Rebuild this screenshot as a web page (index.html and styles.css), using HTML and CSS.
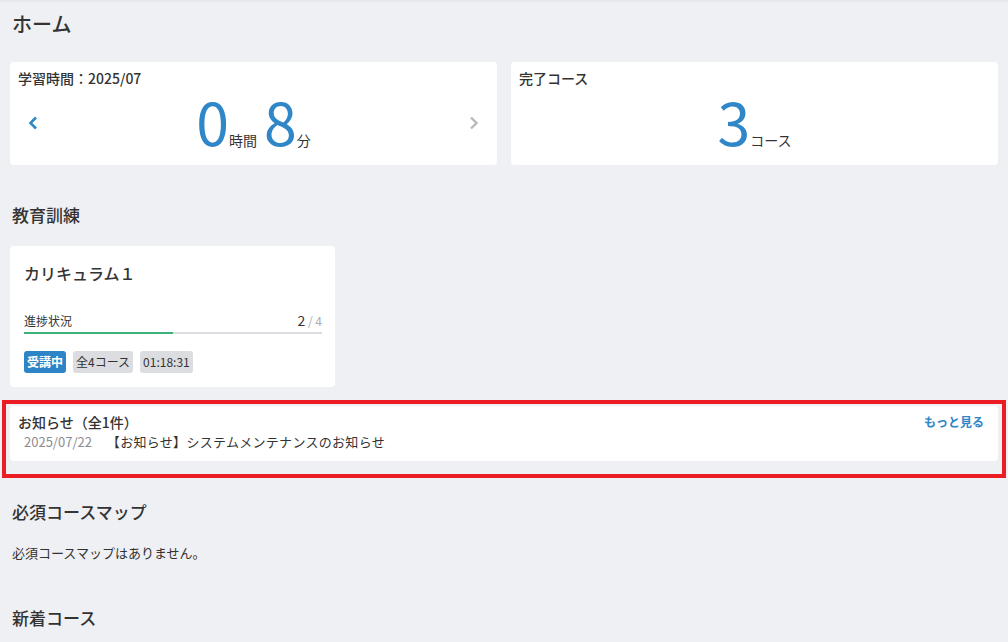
FILE: index.html
```html
<!DOCTYPE html>
<html>
    <head>
        <meta charset="utf-8">
        <link rel="stylesheet" href="styles.css">
    </head>
    <body>
        <div class="topShadow"></div>
        <div class="page">
            <h1 class="pageTitle">ホーム</h1>

            <div class="summaryRow">
                <div class="card summaryCard">
                    <div class="cardTitle">学習時間：2025/07</div>
                    <div class="numberRow">
                        <span class="chevron">
                            <svg width="10" height="14" viewBox="0 0 10 14"><polyline points="8,1.5 2.5,7 8,12.5" fill="none" stroke="#2f87c8" stroke-width="2.6"/></svg>
                        </span>
                        <div class="bigNumber">
                            <span class="digit">0</span><span class="unit unitGap">時間</span><span class="digit">8</span><span class="unit">分</span>
                        </div>
                        <span class="chevron">
                            <svg width="10" height="14" viewBox="0 0 10 14"><polyline points="2,1.5 7.5,7 2,12.5" fill="none" stroke="#b9b9bb" stroke-width="2.4"/></svg>
                        </span>
                    </div>
                </div>
                <div class="card summaryCard">
                    <div class="cardTitle">完了コース</div>
                    <div class="numberRow">
                        <div class="bigNumber">
                            <span class="digit">3</span><span class="unit">コース</span>
                        </div>
                    </div>
                </div>
            </div>

            <h2 class="sectionTitle trainingTitle">教育訓練</h2>
            <div class="card curriculumCard">
                <div class="curriculumName">カリキュラム１</div>
                <div class="progressHead">
                    <span class="progressLabel">進捗状況</span>
                    <span class="progressCount"><span class="done">2</span><span class="total"> / 4</span></span>
                </div>
                <div class="progressTrack"><div class="progressFill" style="width: 50%"></div></div>
                <div class="badges">
                    <span class="badge badgeActive">受講中</span>
                    <span class="badge">全4コース</span>
                    <span class="badge">01:18:31</span>
                </div>
            </div>

            <div class="highlight">
                <div class="card noticeCard">
                    <div class="noticeHead">
                        <span class="noticeTitle">お知らせ（全1件）</span>
                        <a class="moreLink">もっと見る</a>
                    </div>
                    <div class="noticeItem">
                        <span class="noticeDate">2025/07/22</span>
                        <span class="noticeText">【お知らせ】システムメンテナンスのお知らせ</span>
                    </div>
                </div>
            </div>

            <h2 class="sectionTitle mapTitle">必須コースマップ</h2>
            <div class="emptyText">必須コースマップはありません。</div>

            <h2 class="sectionTitle newTitle">新着コース</h2>
        </div>
    </body>
</html>
```

FILE: styles.css
```css
body {
    margin: 0;
    height: 100vh;
    background: #eff0f3;
    color: #333333;
    font-family: "Noto Sans CJK JP", "Noto Sans", sans-serif;
    overflow: hidden;
}

.topShadow {
    height: 3px;
    background: linear-gradient(#e2e3e6, #eff0f3);
}

.page {
    padding: 0 10px;
}

.pageTitle {
    margin: 7px 2px 0;
    font-size: 20px;
    font-weight: 500;
    line-height: 28px;
}

.card {
    background: white;
    border-radius: 4px;
}

.summaryRow {
    display: flex;
    gap: 14px;
    margin-top: 24px;
}

.summaryCard {
    flex: 1;
    height: 103px;
    padding: 6px 8px 0;
    box-sizing: border-box;
}

.cardTitle {
    font-size: 14px;
    font-weight: 500;
    line-height: 20px;
}

.numberRow {
    display: flex;
    align-items: center;
    padding: 0 8px;
    margin-top: 3px;
}

.chevron {
    width: 14px;
    display: flex;
    justify-content: center;
    margin-top: -16px;
}

.bigNumber {
    flex: 1;
    text-align: center;
    color: #2f87c8;
    line-height: 60px;
}

.digit {
    font-size: 59px;
}

.unit {
    font-size: 14px;
    color: #333333;
}

.unitGap {
    margin-right: 7px;
}

.sectionTitle {
    margin: 0 2px;
    font-size: 17px;
    font-weight: 500;
    line-height: 26px;
}

.trainingTitle {
    margin-top: 37px;
}

.curriculumCard {
    width: 325px;
    margin-top: 18px;
    padding: 15px 13px 14px 14px;
    box-sizing: border-box;
}

.curriculumName {
    font-size: 16px;
    font-weight: 500;
    line-height: 24px;
}

.progressHead {
    display: flex;
    justify-content: space-between;
    align-items: baseline;
    margin-top: 25px;
    line-height: 18px;
}

.progressLabel {
    font-size: 12px;
}

.done {
    font-size: 14px;
}

.total {
    font-size: 12px;
    color: #a9abb0;
}

.progressTrack {
    height: 2px;
    margin-top: 2px;
    background: #dcdde2;
}

.progressFill {
    height: 100%;
    background: #3bb27a;
}

.badges {
    display: flex;
    gap: 7px;
    margin-top: 17px;
}

.badge {
    height: 22px;
    padding: 0 3px;
    border-radius: 3px;
    background: #dcdde1;
    font-size: 12px;
    line-height: 22px;
}

.badgeActive {
    background: #2d84c6;
    color: white;
    font-weight: 700;
}

.highlight {
    margin: 13px -8px 0;
    border: 4px solid #ec1c24;
    padding: 2px 4px 13px;
}

.noticeCard {
    padding: 6px 14px 10px 8px;
}

.noticeHead {
    display: flex;
    justify-content: space-between;
    align-items: center;
    line-height: 20px;
}

.noticeTitle {
    font-size: 14px;
    font-weight: 500;
}

.moreLink {
    font-size: 12px;
    font-weight: 700;
    color: #2f87c8;
}

.noticeItem {
    margin-left: 6px;
    font-size: 13px;
    line-height: 19px;
}

.noticeDate {
    color: #8c8d91;
    margin-right: 12px;
}

.noticeText {
    letter-spacing: 0.3px;
}

.mapTitle {
    margin-top: 21px;
}

.emptyText {
    margin: 18px 2px 0;
    font-size: 13px;
    line-height: 20px;
}

.newTitle {
    margin-top: 42px;
}
```
